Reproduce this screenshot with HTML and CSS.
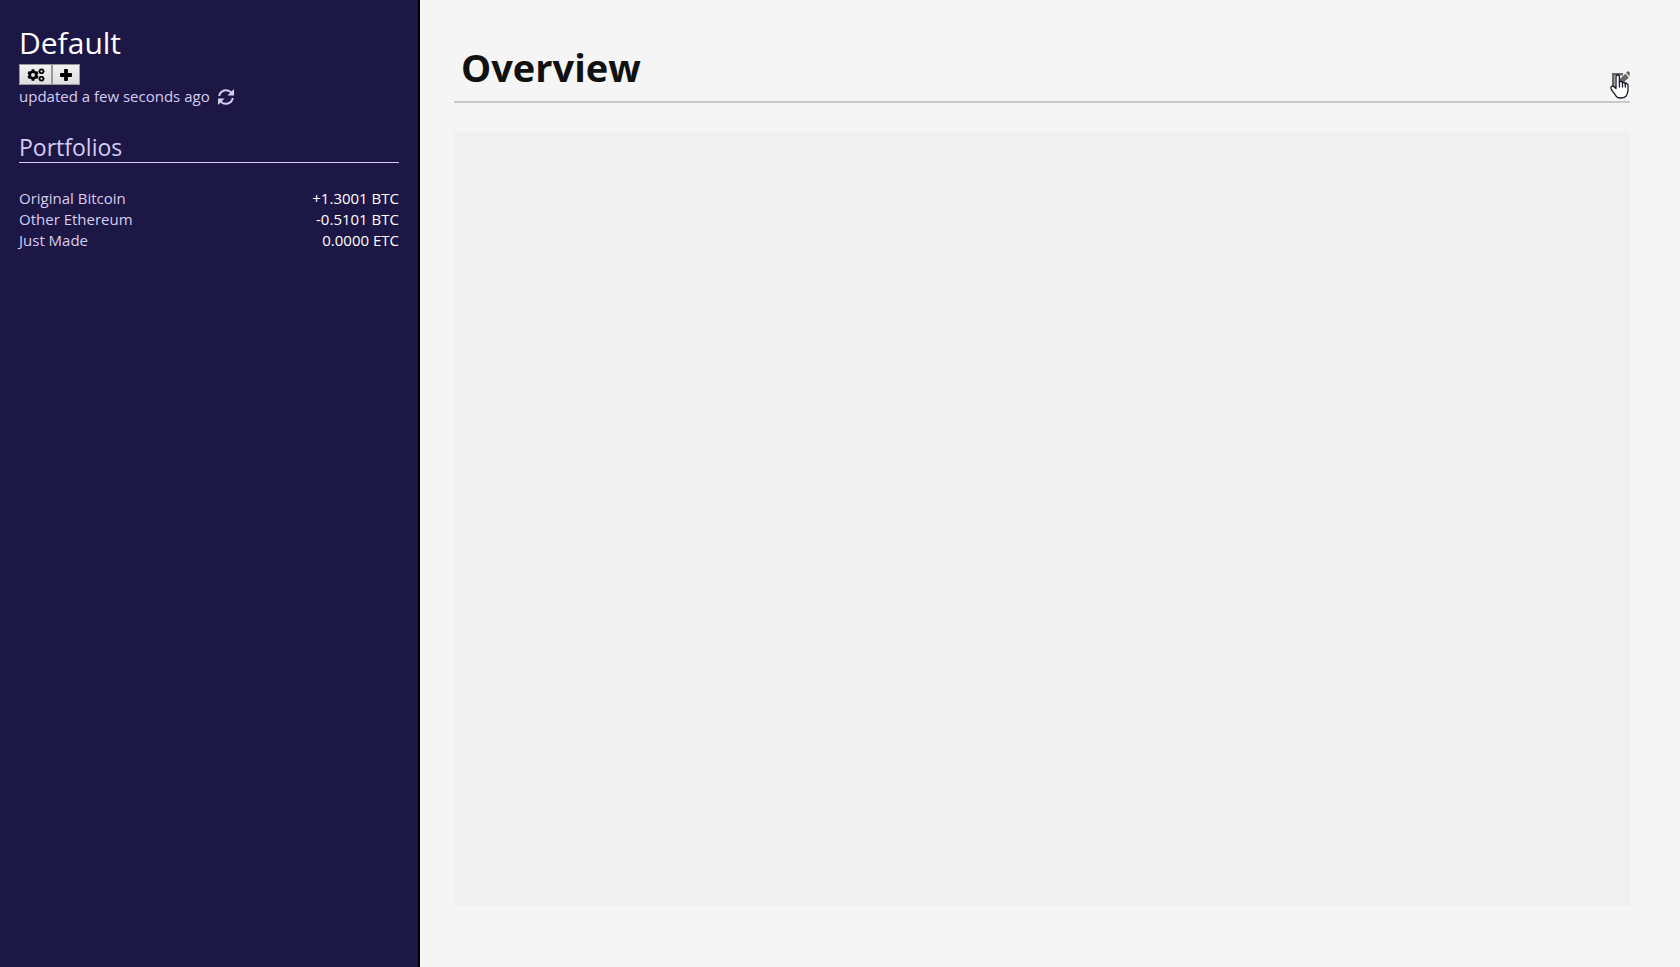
FILE: index.html
```html
<!DOCTYPE html>
<html lang="en">
<head>
<meta charset="utf-8">
<title>Overview</title>
<link rel="stylesheet" href="styles.css">
</head>
<body>
<div class="app">
  <aside class="sidebar">
    <h2 class="profile">Default</h2>
    <div class="toolbar">
      <button class="tool tool-wide" type="button" aria-label="Settings">
        <svg width="18" height="14" viewBox="0 0 18 14" aria-hidden="true">
          <circle cx="6" cy="7" r="3.3" fill="none" stroke="currentColor" stroke-width="2.6"/>
          <g stroke="currentColor" stroke-width="2.8">
            <path d="M6 1.300v2M6 10.700v2M1.100 4.200l1.700 1M9.200 8.800l1.700 1M1.100 9.800l1.700-1M9.200 5.200l1.700-1"/>
          </g>
          <g fill="none" stroke="currentColor" stroke-width="1.6">
            <circle cx="14.500" cy="3.300" r="1.900"/>
            <circle cx="14.500" cy="10.700" r="1.900"/>
          </g>
          <path d="M11.500 3.300h1.200M16.400 3.300h1.200M13 .9l.6.8M15.400 5l.6.8M16 .9l-.6.8M13.600 5l-.6.8M11.500 10.700h1.200M16.400 10.700h1.200M13 8.300l.6.8M15.400 12.400l.6.8M16 8.300l-.6.8M13.600 12.400l-.6.8" fill="none" stroke="currentColor" stroke-width="1"/>
        </svg>
      </button>
      <button class="tool" type="button" aria-label="Add">
        <svg width="12" height="12" viewBox="0 0 12 12" aria-hidden="true">
          <path d="M4.900 0h2.200q.8 0 .8.8v3.300h3.300q.8 0 .8.8v2.200q0 .8-.8.8H7.900v3.300q0 .8-.8.8H4.900q-.8 0-.8-.8V7.900H.8Q0 7.900 0 7.100V4.900q0-.8.8-.8h3.300V.8q0-.8.8-.8z" fill="currentColor"/>
        </svg>
      </button>
    </div>
    <div class="updated">
      <span>updated a few seconds ago</span>
      <button class="refresh" type="button" aria-label="Refresh">
        <svg width="16" height="16" viewBox="0 0 16 16" aria-hidden="true">
          <g fill="none" stroke="currentColor" stroke-width="2">
            <path d="M1.200 7A7 7 0 0 1 13.200 3.400"/>
            <path d="M14.800 9A7 7 0 0 1 2.800 12.600"/>
          </g>
          <path d="M16 0v6.600H9.400zM0 16V9.400h6.600z" fill="currentColor"/>
        </svg>
      </button>
    </div>
    <h3 class="section-title">Portfolios</h3>
    <table class="portfolios">
      <tbody>
        <tr><th scope="row">Original Bitcoin</th><td>+1.3001 BTC</td></tr>
        <tr><th scope="row">Other Ethereum</th><td>-0.5101 BTC</td></tr>
        <tr><th scope="row">Just Made</th><td>0.0000 ETC</td></tr>
      </tbody>
    </table>
  </aside>
  <main class="main">
    <header class="header">
      <h1 class="title">Overview</h1>
      <button class="edit" type="button" aria-label="Edit">
        <svg width="18" height="18" viewBox="0 0 18 18" aria-hidden="true">
          <path d="M11 3.300H1.300v13h12.400v-5" fill="none" stroke="currentColor" stroke-width="2.600"/>
          <path d="M6 13l1-4 6.200-6.200 3.600 3.600L10 13zM14 2L15.400.6q.8-.8 1.600 0l.6.6q.8.800 0 1.600l0 2.800z" fill="currentColor"/>
        </svg>
        <svg class="cursor" width="19" height="25" viewBox="0 0 19 25" aria-hidden="true">
          <path d="M6 14.500V3Q6 1 7.700 1T9.400 3v5.500Q10 7.300 11.200 7.500q1.300.2 1.300 1.700.4-.9 1.500-.7 1.300.2 1.300 1.700.5-.7 1.400-.5 1.300.3 1.300 2V16q0 2.500-1 4.200-.7 1.300-1 2Q14 24 10.500 24T6 22Q5 20 3.300 18.200 1.500 16 1 14.500q-.4-1.600.7-2.100 1.300-.6 2.600.6z" fill="#fff" stroke="#17172b" stroke-width="1.300" stroke-linejoin="round"/>
          <path d="M9.400 8.500V13M12.500 9.200V13M15.300 10.200V13" fill="none" stroke="#17172b" stroke-width="1.300" stroke-linecap="round"/>
        </svg>
      </button>
    </header>
    <section class="panel" aria-label="Overview content"></section>
  </main>
</div>
</body>
</html>
```
FILE: styles.css
```css
* { box-sizing: border-box; }

body {
  margin: 0;
  font: 15px/21px "Open Sans", "Noto Sans", sans-serif;
  color: #111;
  background: #f5f5f5;
}

h1, h2, h3 { margin: 0; }

button {
  padding: 0;
  color: inherit;
  cursor: pointer;
}

svg { display: block; }

.app {
  display: grid;
  grid-template-columns: 25% 1fr;
  min-height: 100vh;
}

.sidebar {
  padding: 22px 19px;
  color: #d5cdf2;
  background: #1d1745;
  border-right: 2px solid #000;
}

.profile {
  font-size: 30px;
  line-height: 42px;
  font-weight: 400;
  color: #fff;
}

.toolbar { display: flex; }

.tool {
  display: flex;
  align-items: center;
  justify-content: center;
  width: 28px;
  height: 21px;
  color: #000;
  background: linear-gradient(#f2f2f2, #dedede);
  border: 1px solid #999;
}

.tool-wide { width: 33px; }

.updated {
  display: flex;
  align-items: center;
  gap: 8px;
  margin-top: 1px;
}

.refresh {
  background: none;
  border: 0;
}

.section-title {
  margin-top: 26px;
  font-size: 23px;
  line-height: 29px;
  font-weight: 400;
  border-bottom: 1px solid #d5cdf2;
}

.portfolios {
  width: 100%;
  margin-top: 25px;
  border-collapse: collapse;
}

.portfolios th,
.portfolios td { padding: 0; }

.portfolios th {
  font-weight: 400;
  text-align: left;
}

.portfolios td {
  color: #fff;
  text-align: right;
}

.main {
  display: flex;
  flex-direction: column;
  gap: 29px;
  padding: 40px 50px 61px 34px;
}

.header {
  display: flex;
  align-items: flex-end;
  justify-content: space-between;
  padding-left: 7px;
  border-bottom: 2px solid #c8c8c8;
}

.title {
  padding-bottom: 7px;
  font-size: 38px;
  line-height: 54px;
  font-weight: 700;
}

.edit {
  position: relative;
  margin-bottom: 12px;
  color: #666;
  background: none;
  border: 0;
}

.cursor {
  position: absolute;
  top: 3px;
  left: -2px;
}

.panel {
  flex: 1;
  background: #f0f0f0;
}
```
